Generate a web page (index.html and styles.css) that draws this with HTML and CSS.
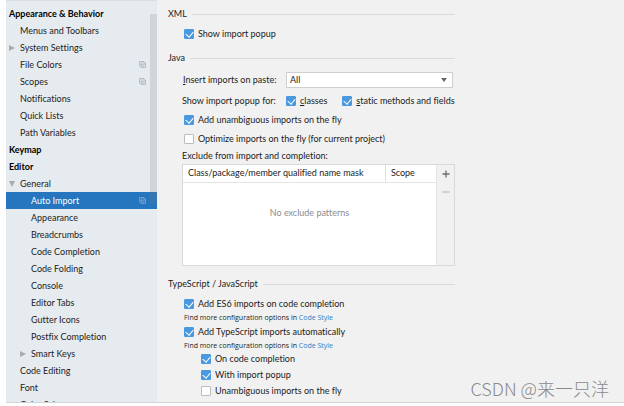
FILE: index.html
```html
<!DOCTYPE html>
<html lang="en">
<head>
    <meta charset="UTF-8">
    <meta name="viewport" content="width=device-width, initial-scale=1.0">
    <title>Settings - Auto Import</title>
    <link rel="stylesheet" href="styles.css">
</head>
<body>
    <svg class="sprite" aria-hidden="true">
        <symbol id="copy" viewBox="0 0 7 7">
            <path d="M.5 .5h4.500v4.500h-4.500z M2 5v1.500h4.500v-4.500h-1.500 M1.500 2h2.500 M1.500 3.500h2.500" fill="none" stroke="currentColor" stroke-width=".8"/>
        </symbol>
        <symbol id="right" viewBox="0 0 6 6"><path d="M0 0l6 3-6 3z" fill="currentColor"/></symbol>
        <symbol id="down" viewBox="0 0 6 6"><path d="M0 0h6l-3 6z" fill="currentColor"/></symbol>
    </svg>
    <div class="window">
        <nav class="sidebar" aria-label="Settings">
            <ul class="tree">
                <li class="item top">Appearance &amp; Behavior</li>
                <li class="item">Menus and Toolbars</li>
                <li class="item"><svg class="arrow"><use href="#right"/></svg>System Settings</li>
                <li class="item">File Colors<svg class="copy"><use href="#copy"/></svg></li>
                <li class="item">Scopes<svg class="copy"><use href="#copy"/></svg></li>
                <li class="item">Notifications</li>
                <li class="item">Quick Lists</li>
                <li class="item">Path Variables</li>
                <li class="item top">Keymap</li>
                <li class="item top">Editor</li>
                <li class="item"><svg class="arrow"><use href="#down"/></svg>General</li>
                <li class="item sub active">Auto Import<svg class="copy"><use href="#copy"/></svg></li>
                <li class="item sub">Appearance</li>
                <li class="item sub">Breadcrumbs</li>
                <li class="item sub">Code Completion</li>
                <li class="item sub">Code Folding</li>
                <li class="item sub">Console</li>
                <li class="item sub">Editor Tabs</li>
                <li class="item sub">Gutter Icons</li>
                <li class="item sub">Postfix Completion</li>
                <li class="item sub"><svg class="arrow"><use href="#right"/></svg>Smart Keys</li>
                <li class="item">Code Editing</li>
                <li class="item">Font</li>
                <li class="item"><svg class="arrow"><use href="#right"/></svg>Color Scheme</li>
            </ul>
            <div class="scrollbar"></div>
        </nav>

        <main class="content">
            <section class="group">
                <h2 class="group-title">XML</h2>
                <label class="row"><input type="checkbox" checked>Show import popup</label>
            </section>

            <section class="group">
                <h2 class="group-title">Java</h2>
                <div class="row insert">
                    <label class="field-label" for="insert"><u>I</u>nsert imports on paste:</label>
                    <div class="select">
                        <select id="insert">
                            <option>All</option>
                            <option>Ask</option>
                            <option>None</option>
                        </select>
                    </div>
                </div>
                <div class="row popup">
                    <span class="field-label">Show import popup for:</span>
                    <label class="check"><input type="checkbox" checked><span><u>c</u>lasses</span></label>
                    <label class="check"><input type="checkbox" checked><span><u>s</u>tatic methods and fields</span></label>
                </div>
                <label class="row tall"><input type="checkbox" checked>Add unambiguous imports on the fly</label>
                <label class="row tall"><input type="checkbox">Optimize imports on the fly (for current project)</label>
                <p class="caption" id="exclude-label">Exclude from import and completion:</p>
                <div class="exclude">
                    <table class="patterns" aria-labelledby="exclude-label">
                        <thead>
                            <tr><th class="mask">Class/package/member qualified name mask</th><th>Scope</th></tr>
                        </thead>
                        <tbody>
                            <tr><td colspan="2">No exclude patterns</td></tr>
                        </tbody>
                    </table>
                    <div class="tools">
                        <button class="tool" aria-label="Add"><svg viewBox="0 0 8 8"><path d="M4 .5v7M.5 4h7" stroke="currentColor" stroke-width="1.300"/></svg></button>
                        <button class="tool" aria-label="Remove" disabled><svg viewBox="0 0 8 8"><path d="M.5 4h7" stroke="currentColor" stroke-width="1.300"/></svg></button>
                    </div>
                </div>
            </section>

            <section class="group script">
                <h2 class="group-title">TypeScript / JavaScript</h2>
                <label class="row"><input type="checkbox" checked>Add ES6 imports on code completion</label>
                <p class="hint">Find more configuration options in <a href="#">Code Style</a></p>
                <label class="row"><input type="checkbox" checked>Add TypeScript imports automatically</label>
                <p class="hint">Find more configuration options in <a href="#">Code Style</a></p>
                <label class="row nested"><input type="checkbox" checked>On code completion</label>
                <label class="row nested"><input type="checkbox" checked>With import popup</label>
                <label class="row nested"><input type="checkbox">Unambiguous imports on the fly</label>
            </section>
        </main>
    </div>
    <div class="watermark">CSDN @来一只洋</div>
</body>
</html>
```
FILE: styles.css
```css
* {
  box-sizing: border-box;
}

body {
  margin: 0;
  height: 100vh;
  padding: 0 0 3px 6px;
  background: #fff;
  color: #1c1c1c;
  font: 9px/16px Lato, "Open Sans", sans-serif;
  font-variant-ligatures: none;
  overflow: hidden;
}

h2,
p,
ul {
  margin: 0;
  padding: 0;
  font-size: inherit;
  font-weight: normal;
}

.sprite {
  display: none;
}

.window {
  display: flex;
  height: 100%;
  background: #f1f1f1;
  border-bottom: 1px solid #d4d4d4;
}

/* settings tree */
.sidebar {
  display: flex;
  width: 151px;
  flex: none;
  background: #e6ebf0;
  border-top: 1px solid #d9dee2;
  overflow: hidden;
  position: relative;
}

.tree {
  flex: 1;
  padding-top: 4px;
  list-style: none;
}

.item {
  display: flex;
  align-items: center;
  height: 17px;
  padding: 0 11px 0 14px;
  white-space: nowrap;
}

.item.top {
  padding-left: 3px;
  color: #000;
  font-weight: bold;
}

.item.sub {
  padding-left: 25px;
}

.item.active {
  background: #2675bf;
  color: #fff;
}

.arrow {
  width: 6px;
  height: 6px;
  margin: 0 5px 0 -11px;
  color: #a9adb0;
}

.copy {
  width: 7px;
  height: 7px;
  margin-left: auto;
  color: #a9b2ba;
}

.active .copy {
  color: #7fa9d0;
}

.scrollbar {
  position: absolute;
  top: 13px;
  right: 0;
  width: 7px;
  height: 190px;
  background: rgba(120, 125, 130, 0.2);
}

/* right hand page */
.content {
  flex: 1;
  max-width: 298px;
  padding: 5px 0 0 11px;
}

.group + .group {
  margin-top: 6px;
}

.group + .script {
  margin-top: 9px;
}

.group-title {
  display: flex;
  align-items: center;
  gap: 5px;
  height: 18px;
  margin-bottom: 2px;
}

.group-title::after {
  content: "";
  flex: 1;
  height: 1px;
  background: #dadada;
}

.row {
  display: flex;
  align-items: center;
  gap: 4px;
  height: 18px;
  padding-left: 16px;
  white-space: nowrap;
}

.tall {
  height: 19px;
}

.insert {
  gap: 6px;
  margin: 4px 2px 3px 0;
  padding-left: 15px;
}

.popup {
  gap: 15px;
  padding-left: 14px;
}

.insert .field-label {
  width: 97px;
}

.popup .field-label {
  width: 89px;
}

.check {
  display: flex;
  align-items: center;
  gap: 4px;
}

input {
  appearance: none;
  display: flex;
  justify-content: center;
  width: 10px;
  height: 10px;
  margin: 0;
  flex: none;
  border: 1px solid #bcbcbc;
  border-radius: 1px;
  background: #fff;
}

input:checked {
  border-color: #4a98de;
  background: #4a98de;
}

input:checked::after {
  content: "";
  width: 4px;
  height: 6px;
  border: solid #fff;
  border-width: 0 1px 1px 0;
  transform: rotate(40deg);
}

.select {
  display: flex;
  align-items: center;
  flex: 1;
  height: 16px;
  padding-right: 5px;
  border: 1px solid #cfcfcf;
  background: #fff;
}

.select::after {
  content: "";
  border: 3px solid transparent;
  border-top: 4px solid #666;
  border-bottom: 0;
}

select {
  appearance: none;
  flex: 1;
  padding: 0 3px;
  border: 0;
  background: none;
  color: inherit;
  font: inherit;
}

.caption {
  padding-left: 14px;
}

.exclude {
  display: flex;
  height: 102px;
  margin-left: 14px;
  border: 1px solid #d9d9d9;
}

.patterns {
  flex: 1;
  border-collapse: collapse;
  background: #fff;
}

.patterns th {
  height: 17px;
  padding: 0 5px;
  border-bottom: 1px solid #e4e4e4;
  font-weight: normal;
  text-align: left;
  white-space: nowrap;
}

.patterns .mask {
  width: 80%;
  border-right: 1px solid #dedede;
}

.patterns td {
  padding: 22px 0 0;
  color: #8c8c8c;
  text-align: center;
  vertical-align: top;
}

.tools {
  display: flex;
  flex-direction: column;
  width: 18px;
  border-left: 1px solid #e4e4e4;
}

.tool {
  display: flex;
  align-items: center;
  justify-content: center;
  height: 18px;
  padding: 0;
  border: 0;
  background: none;
  color: #6e6e6e;
}

.tool:disabled {
  color: #bdbdbd;
}

.tool svg {
  width: 8px;
  height: 8px;
}

.hint {
  padding-left: 16px;
  font-family: "Open Sans", sans-serif;
  font-size: 7px;
  line-height: 10px;
}

.hint a {
  color: #2f7fc4;
  text-decoration: none;
}

.nested {
  height: 16px;
  padding-left: 33px;
}

.watermark {
  position: absolute;
  right: 15px;
  bottom: 4px;
  color: #8a8a8a;
  font: 300 18px/28px "Noto Sans CJK SC", sans-serif;
}
```
